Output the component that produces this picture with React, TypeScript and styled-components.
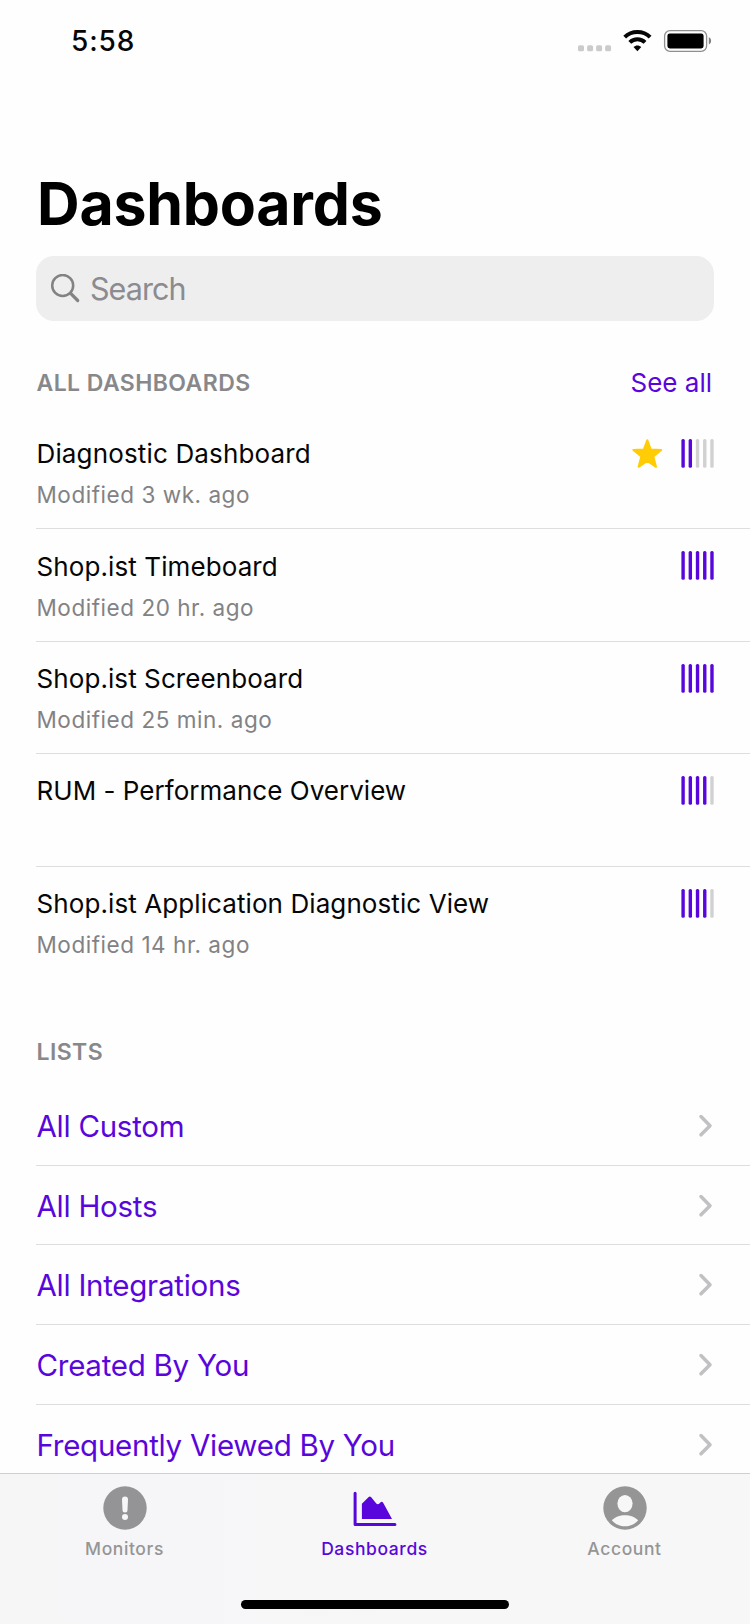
import React from 'react';
import styled, { createGlobalStyle } from 'styled-components';

const purple = '#5806dc';
const gray = '#88888b';

const GlobalStyle = createGlobalStyle`
  * { box-sizing: border-box; }
  body { margin: 0; background: #fefefe; }
`;

const Screen = styled.div`
  display: flex;
  flex-direction: column;
  width: 750px;
  height: 1624px;
  overflow: hidden;
  background: #fefefe;
  color: #060606;
  font-family: Inter, 'Liberation Sans', sans-serif;
`;

const StatusBar = styled.header`
  display: flex;
  align-items: center;
  justify-content: space-between;
  flex: none;
  height: 82px;
  padding: 0 38px 0 71px;
`;

const Clock = styled.time`
  font-size: 28px;
  font-weight: 500;
  letter-spacing: 0.9px;
`;

const Content = styled.main`
  flex: 1;
  min-height: 0;
  overflow: hidden;
  padding: 86px 0 0 36px;
`;

const Title = styled.h1`
  margin: 0;
  padding-left: 1px;
  color: #000;
  font-size: 59px;
  font-weight: 700;
  line-height: 71px;
  letter-spacing: -0.22px;
`;

const SearchField = styled.label`
  display: flex;
  align-items: center;
  gap: 10px;
  height: 65px;
  margin: 17px 36px 0 0;
  padding-left: 14px;
  border-radius: 18px;
  background: #eeeeee;
  color: #8b8b90;
  font-size: 30.5px;
  letter-spacing: -0.96px;
`;

const SectionHeader = styled.div<{ $top: number }>`
  display: flex;
  align-items: center;
  justify-content: space-between;
  height: 44px;
  margin: ${(p) => p.$top}px 38px 12px 0;
`;

const SectionTitle = styled.h2`
  margin: 0 0 0 0.5px;
  color: ${gray};
  font-size: 23px;
  font-weight: 560;
  letter-spacing: 0.43px;
`;

const SeeAll = styled.a`
  padding-bottom: 2px;
  color: ${purple};
  font-size: 26px;
  font-weight: 400;
`;

const DashboardRow = styled.article`
  display: flex;
  justify-content: space-between;
  height: 112.4px;
  padding: 20.2px 36px 0 0;
  border-bottom: 1px solid #dedede;
  &:last-child { border-bottom-color: transparent; }
`;

const DashboardName = styled.h3<{ $spacing: number }>`
  margin: 0 0 9px;
  padding-left: 0.5px;
  font-size: 26px;
  font-weight: 400;
  line-height: 34px;
  letter-spacing: ${(p) => p.$spacing}px;
`;

const Modified = styled.p`
  margin: 0;
  padding-left: 0.5px;
  color: #828285;
  font-size: 22.5px;
  font-weight: 400;
  line-height: 30px;
  letter-spacing: 0.54px;
`;

const Indicators = styled.div`
  display: flex;
  align-items: flex-start;
  gap: 18px;
  padding-top: 1.8px;
`;

const ListRow = styled.a`
  display: flex;
  align-items: center;
  justify-content: space-between;
  height: 79.75px;
  padding: 1px 37px 0 0.5px;
  border-bottom: 1px solid #dedede;
  color: ${purple};
  font-size: 29.5px;
  font-weight: 400;
  letter-spacing: -0.26px;
`;

const TabBar = styled.nav`
  display: flex;
  flex-direction: column;
  align-items: center;
  justify-content: space-between;
  flex: none;
  height: 151px;
  padding-bottom: 15px;
  border-top: 1px solid #cfcfd0;
  background: linear-gradient(90deg, #f6f6f6, #f6f5f8 18%, #f7f7f7 55%, #f7f7f7);
`;

const Tabs = styled.div`
  display: grid;
  grid-template-columns: repeat(3, 250px);
  width: 100%;
`;

const Tab = styled.a<{ $active?: boolean }>`
  display: flex;
  flex-direction: column;
  align-items: center;
  gap: 8px;
  padding: 12px 1px 0 0;
  color: ${(p) => (p.$active ? purple : '#959595')};
  font-size: 17.5px;
  font-weight: 450;
  line-height: 22px;
  letter-spacing: 0.6px;
`;

const HomeIndicator = styled.div`
  width: 268px;
  height: 9px;
  border-radius: 5px;
  background: #000;
`;

const StatusIcons = () => (
  <svg width="134" height="24" viewBox="578 29 134 24">
    {[578, 587.1, 596.1, 605.1].map((x) => (
      <rect key={x} x={x} y="45.3" width="6" height="6" rx="1.6" fill="#cbcbcb" />
    ))}
    <g fill="none" stroke="#060606" strokeWidth="4">
      <path d="M624.7 37.1C631.6 30.4 643.2 30.4 650.1 37.1" />
      <path d="M629.8 42.4C634 38.2 640.8 38.2 645 42.4" />
    </g>
    <path d="M633.5 47.1C635.6 45 639.2 45 641.3 47.1L637.4 51.2Z" fill="#060606" />
    <rect x="664.6" y="30.6" width="42" height="20.8" rx="5.4" fill="none" stroke="#8f8f8f" strokeWidth="1.3" />
    <rect x="667.4" y="33.4" width="36.2" height="15" rx="2.4" fill="#000" />
    <path d="M708.8 37.2C711.9 38.3 711.9 43.3 708.8 44.4Z" fill="#808080" />
  </svg>
);

const SearchIcon = () => (
  <svg width="30" height="30" viewBox="-0.4 0.8 30 30" fill="none" stroke="#828284" strokeLinecap="round">
    <circle cx="12.3" cy="12.3" r="10.5" strokeWidth="2.5" />
    <path d="M20.5 20.5L27.3 27.3" strokeWidth="3.2" />
  </svg>
);

const StarIcon = () => (
  <svg width="31" height="30" viewBox="0 0 31 30">
    <path
      d="M15.3 1.2L18.8 10.6L29.2 11L21.3 17.4L24 27.8L15.3 22L6.6 27.8L9.3 17.4L1.4 11L11.8 10.6Z"
      fill="#ffcc05" stroke="#ffcc05" strokeWidth="2" strokeLinejoin="round"
    />
  </svg>
);

const Popularity = ({ level }: { level: number }) => (
  <svg width="33" height="29" viewBox="0 0 33 29">
    {[0, 1, 2, 3, 4].map((i) => (
      <rect key={i} x={0.4 + i * 7.22} y="0" width="3.4" height="28.8" rx="1.5" fill={i < level ? purple : '#d1d1d3'} />
    ))}
  </svg>
);

const Chevron = () => (
  <svg width="15" height="24" viewBox="0 0 15 24" fill="none">
    <path d="M3 2.6L12 11.7L3 20.8" stroke="#c1c1c3" strokeWidth="3.5" strokeLinecap="round" strokeLinejoin="round" />
  </svg>
);

const MonitorsIcon = () => (
  <svg width="44" height="44" viewBox="0 0 44 44">
    <circle cx="22" cy="22" r="21.7" fill="#949396" />
    <path d="M19 13.5A3 3 0 0 1 25 13.5L24.5 24A2.5 2.5 0 0 1 19.5 24Z" fill="#f7f6f8" />
    <circle cx="22" cy="30.9" r="3" fill="#f7f6f8" />
  </svg>
);

const DashboardsIcon = () => (
  <svg width="44" height="44" viewBox="0 0 44 44">
    <path d="M2.1 7.2V38.5H41.9" fill="none" stroke={purple} strokeWidth="3" strokeLinecap="round" strokeLinejoin="round" />
    <path
      d="M8.9 17.7L15.7 11Q16.8 10 18 11L23.3 17.5Q24.8 19 26.4 17.6L27.6 16.3Q29 15.2 30.3 16.9L39 33H8.9Z"
      fill={purple}
    />
  </svg>
);

const AccountIcon = () => (
  <svg width="44" height="44" viewBox="0 0 44 44">
    <circle cx="22" cy="22" r="21.7" fill="#959595" />
    <ellipse cx="22" cy="17.6" rx="7.6" ry="8.6" fill="#f7f7f7" />
    <path d="M8.9 34.5C14.5 27.5 29.5 27.5 35.1 34.5C28 42.2 16 42.2 8.9 34.5Z" fill="#f7f7f7" />
  </svg>
);

const dashboards = [
  { name: 'Diagnostic Dashboard', modified: 'Modified 3 wk. ago', level: 2, starred: true, spacing: 0.15 },
  { name: 'Shop.ist Timeboard', modified: 'Modified 20 hr. ago', level: 5, spacing: 0.1 },
  { name: 'Shop.ist Screenboard', modified: 'Modified 25 min. ago', level: 5, spacing: 0.08 },
  { name: 'RUM - Performance Overview', level: 4, spacing: 0.03 },
  { name: 'Shop.ist Application Diagnostic View', modified: 'Modified 14 hr. ago', level: 4, spacing: 0.09 },
];

const lists = ['All Custom', 'All Hosts', 'All Integrations', 'Created By You', 'Frequently Viewed By You'];

export default function App() {
  return (
    <>
      <GlobalStyle />
      <Screen>
        <StatusBar>
          <Clock>5:58</Clock>
          <StatusIcons />
        </StatusBar>
        <Content>
          <Title>Dashboards</Title>
          <SearchField>
            <SearchIcon />
            Search
          </SearchField>
          <section>
            <SectionHeader $top={40}>
              <SectionTitle>ALL DASHBOARDS</SectionTitle>
              <SeeAll>See all</SeeAll>
            </SectionHeader>
            {dashboards.map((d) => (
              <DashboardRow key={d.name}>
                <div>
                  <DashboardName $spacing={d.spacing}>{d.name}</DashboardName>
                  {d.modified && <Modified>{d.modified}</Modified>}
                </div>
                <Indicators>
                  {d.starred && <StarIcon />}
                  <Popularity level={d.level} />
                </Indicators>
              </DashboardRow>
            ))}
          </section>
          <section>
            <SectionHeader $top={51}>
              <SectionTitle>LISTS</SectionTitle>
            </SectionHeader>
            {lists.map((name) => (
              <ListRow key={name}>
                {name}
                <Chevron />
              </ListRow>
            ))}
          </section>
        </Content>
        <TabBar>
          <Tabs>
            <Tab>
              <MonitorsIcon />
              Monitors
            </Tab>
            <Tab $active>
              <DashboardsIcon />
              Dashboards
            </Tab>
            <Tab>
              <AccountIcon />
              Account
            </Tab>
          </Tabs>
          <HomeIndicator />
        </TabBar>
      </Screen>
    </>
  );
}
